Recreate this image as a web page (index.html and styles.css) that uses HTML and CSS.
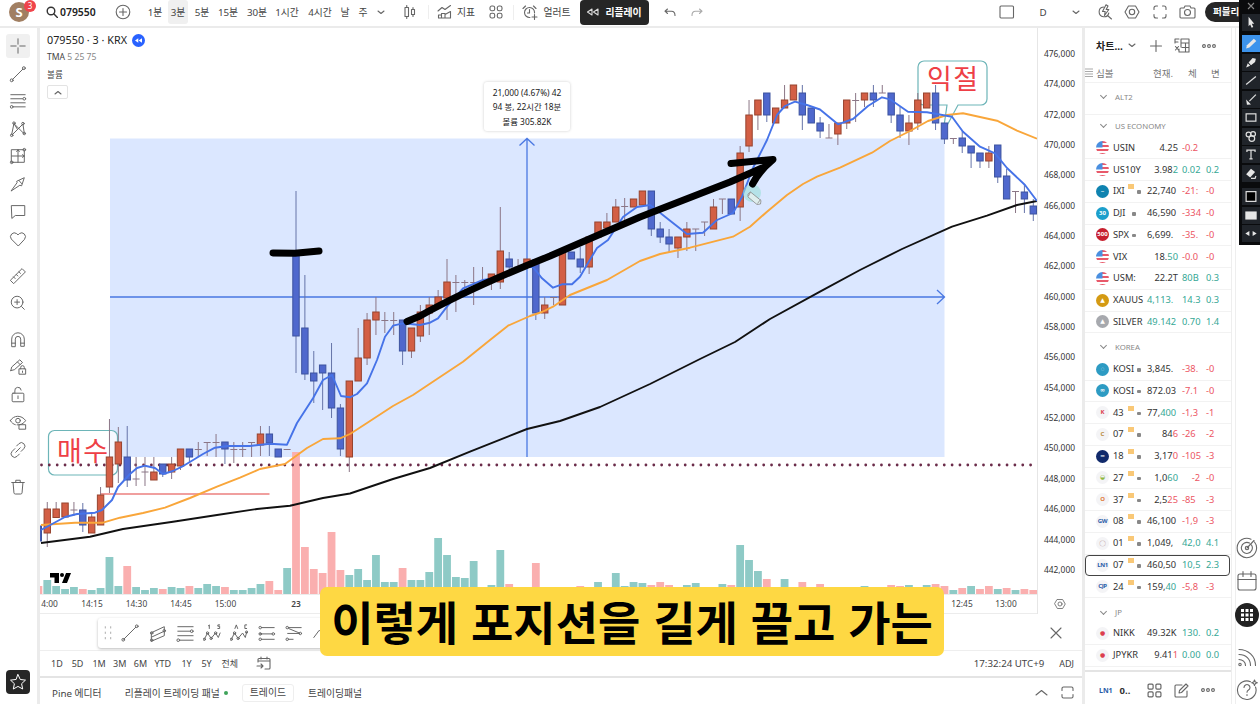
FILE: index.html
```html
<!DOCTYPE html>
<html lang="ko">
<head>
<meta charset="utf-8">
<title>079550 · 3 · KRX</title>
<link rel="stylesheet" href="styles.css">
</head>
<body>
<div class="app">
  <header class="topbar">
    <div class="avatar">S<span class="badge">3</span></div>
    <div class="search"><svg class="ic" width="12" height="12" viewBox="0 0 12 12"><circle cx="5" cy="5" r="3.8"/><path d="M8 8l3.400 3.400"/></svg><b>079550</b></div>
    <svg class="ic" width="16" height="16" viewBox="0 0 16 16"><circle cx="8" cy="8" r="6.800"/><path d="M8 4.500v7M4.500 8h7"/></svg>
    <span>1분</span><span class="tf-on">3분</span><span>5분</span><span>15분</span><span>30분</span><span>1시간</span><span>4시간</span><span>날</span><span>주</span>
    <svg class="ic" width="8" height="5" viewBox="0 0 8 5"><path d="M1 1l3 2.500 3-2.500"/></svg>
    <svg class="ic" width="12" height="14" viewBox="0 0 12 14"><rect x="1" y="2.500" width="3.500" height="9"/><path d="M2.750 0.500v2M2.750 11.500v2M9 2.500v2M9 9.500v2"/><rect x="7.500" y="4.500" width="3" height="5"/></svg>
    <div class="pair"><svg class="ic" width="15" height="14" viewBox="0 0 15 14"><path d="M1 6l4-3.500 3 2 5.500-4M1.500 13v-3h3v3zM4.500 13V8.500h3.500V13zM8 13V9.500l5.500-3V13z"/></svg>지표</div>
    <svg class="ic" width="14" height="14" viewBox="0 0 14 14"><rect x="1" y="1" width="4.700" height="4.700" rx="1.800"/><rect x="8.300" y="1" width="4.700" height="4.700" rx="1.800"/><rect x="1" y="8.300" width="4.700" height="4.700" rx="1.800"/><rect x="8.300" y="8.300" width="4.700" height="4.700" rx="1.800"/></svg>
    <div class="pair"><svg class="ic" width="16" height="15" viewBox="0 0 16 15"><path d="M12.500 8A5 5 0 1 0 8 12.500M7.500 4.500V8H5.500M1 3.500L3.500 1M11.500 1L14 3.500M12.500 9.500v5M10 12h5"/></svg>얼러트</div>
    <div class="replay"><svg class="ic" width="13" height="8" viewBox="0 0 13 8"><path d="M6 1v6L1.500 4zM12 1v6L7.500 4z"/></svg>리플레이</div>
    <svg class="ic" width="12" height="9" viewBox="0 0 12 9"><path d="M3.500 1L1 3.200l2.500 2.300M1 3.200h6.500C10 3.200 11 5 11 7.500"/></svg>
    <svg class="ic faint" width="12" height="9" viewBox="0 0 12 9"><path d="M8.500 1L11 3.200 8.500 5.500M11 3.200H4.500C2 3.200 1 5 1 7.500"/></svg>
    <i></i>
    <svg class="ic" width="16" height="14" viewBox="0 0 16 14"><rect x="1" y="1" width="13.500" height="12" rx="1"/></svg>
    <span>D</span>
    <svg class="ic" width="8" height="5" viewBox="0 0 8 5"><path d="M1 1l3 2.500 3-2.500"/></svg>
    <svg class="ic" width="16" height="16" viewBox="0 0 16 16"><path d="M6.500 3A4.900 4.900 0 1 0 11.800 9M10.500 11.500l4 3.500M9 .8L5.500 7.500h2.700l-.7 4 4.300-6H9.200L11 2z"/></svg>
    <svg class="ic" width="16" height="16" viewBox="0 0 16 16"><path d="M4.500 2h7L15 8l-3.500 6h-7L1 8z"/><circle cx="8" cy="8" r="2.700"/></svg>
    <svg class="ic" width="14" height="14" viewBox="0 0 14 14"><path d="M1 4.500V3a2 2 0 0 1 2-2h1.500M9.500 1H11a2 2 0 0 1 2 2v1.500M13 9.500V11a2 2 0 0 1-2 2H9.500M4.500 13H3a2 2 0 0 1-2-2V9.500"/></svg>
    <svg class="ic" width="17" height="14" viewBox="0 0 17 14"><path d="M1 4a1 1 0 0 1 1-1h3l1-2h5l1 2h3a1 1 0 0 1 1 1v8a1 1 0 0 1-1 1H2a1 1 0 0 1-1-1z"/><circle cx="8.500" cy="7.500" r="3"/></svg>
    <div class="publish">퍼블리</div>
  </header>

  <nav class="tools">
    <a class="on"><svg class="ic" viewBox="0 0 20 20"><path d="M10 2v6M10 12v6M2 10h6M12 10h6"/></svg></a>
    <a><svg class="ic" viewBox="0 0 20 20"><path d="M4 16L15.500 4.500"/><circle cx="3" cy="17" r="1.600"/><circle cx="16.500" cy="3.500" r="1.600"/></svg></a>
    <a><svg class="ic" viewBox="0 0 20 20"><path d="M2 3h16M2 7.500h13M2 12h16M5 16.500h13"/><circle cx="17" cy="7.500" r="1.500"/><circle cx="3" cy="16.500" r="1.500"/></svg></a>
    <a><svg class="ic" viewBox="0 0 20 20"><path d="M3 16L5.500 4l11 11M15.500 4.500l-12 12M5.500 4l4 6.500L15.500 4.500 17 15"/><circle cx="3" cy="17" r="1.400"/><circle cx="5.500" cy="3.500" r="1.400"/><circle cx="15.500" cy="4" r="1.400"/><circle cx="17" cy="15" r="1.400"/></svg></a>
    <a><svg class="ic" viewBox="0 0 20 20"><path d="M3 3h14v14H3zM10 3v14M3 10h14M8.500 5L10 3l1.500 2M15 8.500L17 10l-2 1.500"/><circle cx="17" cy="3" r="1.500"/><circle cx="3" cy="17" r="1.500"/></svg></a>
    <a><svg class="ic" viewBox="0 0 20 20"><path d="M2.500 17.500L9 8.500 8.500 7l8.500-4-3 9-1.500-.5zM11 6l3 3.500"/></svg></a>
    <a><svg class="ic" viewBox="0 0 20 20"><path d="M3 4h14.500v11H7l-3.500 3z"/></svg></a>
    <a><svg class="ic" viewBox="0 0 20 20"><path d="M10 17.500L2.500 10A4.300 4.300 0 0 1 8.500 4L10 5.500 11.500 4a4.300 4.300 0 0 1 6 6z"/></svg></a>
    <a class="gap"><svg class="ic" viewBox="0 0 20 20"><path d="M1.800 14.500L14.500 1.800l3.700 3.700L5.500 18.200zM5 11l1.800 1.800M8 8.200l1.800 1.800M11 5.300l1.800 1.800"/></svg></a>
    <a><svg class="ic" viewBox="0 0 20 20"><circle cx="9" cy="9" r="6.500"/><path d="M14 14l3 3M9 6.300v5.400M6.300 9h5.400"/></svg></a>
    <a class="gap"><svg class="ic" viewBox="0 0 20 20"><path d="M3 17V9a7 7 0 0 1 14 0v8h-4V9a3 3 0 0 0-6 0v8zM3 13.500h4M13 13.500h4"/></svg></a>
    <a><svg class="ic" viewBox="0 0 20 20"><path d="M2 14l1-4L12 2l3 3-9 8-4 1zM9.500 4.500l3 3M11.500 12h7v6h-7zM13 12v-1.500a2 2 0 0 1 4 0V12M15 14.500v1.500"/></svg></a>
    <a><svg class="ic" viewBox="0 0 20 20"><rect x="3.500" y="8" width="13" height="9.500" rx="1"/><path d="M6.500 8V5.500a3.500 3.500 0 0 1 7-1M10 11v3"/></svg></a>
    <a><svg class="ic" viewBox="0 0 20 20"><path d="M1.500 8.500C5 2 14 2 18.500 8.500 16 12 13 13.500 9 13.200M1.500 8.500C3 11 5 12.500 7 13"/><circle cx="10" cy="8.500" r="2.600"/><rect x="11.500" y="13" width="7" height="5"/></svg></a>
    <a><svg class="ic" viewBox="0 0 20 20"><path d="M8.500 5.500l2.500-2.500a3.600 3.600 0 0 1 5.500 5.500L13.500 11.500M11.500 14.500L9 17a3.600 3.600 0 0 1-5.500-5.500L6.500 8.500M7.500 12.500l5-5"/></svg></a>
    <a class="gap"><svg class="ic" viewBox="0 0 20 20"><path d="M3 5h14M7.500 5V2.500h5V5M4.500 5l1 11.500a1.500 1.500 0 0 0 1.500 1.300h6a1.500 1.500 0 0 0 1.500-1.300L15.500 5"/></svg></a>
    <a class="star"><svg class="ic" viewBox="0 0 20 20"><path d="M10 1.800l2.500 5.400 5.800.7-4.300 4 1.200 5.900L10 14.900l-5.200 2.900L6 11.900l-4.300-4 5.800-.7z"/></svg></a>
  </nav>

  <main class="chart">
    <div class="plot-row">
      <svg id="plot" class="plot" width="997" height="586" viewBox="40 28 997 586">
        <rect class="measure" x="110" y="138.500" width="834.500" height="318.500"/>
        <g id="volume"></g>
        <path class="m-line" d="M110 297H944M527 457V139M519.500 145.500L527 138.500l7.500 7M937 290l7.500 7-7.500 7"/>
        <g class="note"><rect x="48.500" y="430.500" width="69" height="44.500" rx="6"/><path d="M924 61h57a6 6 0 0 1 6 6v32a6 6 0 0 1-6 6h-23L943 133l4-28h-23a6 6 0 0 1-6-6V67a6 6 0 0 1 6-6z"/></g>
        <text class="note-text" x="57" y="461" textLength="51">매수</text>
        <text class="note-text" x="927" y="89" textLength="51">익절</text>
        <path class="dots" d="M41.500 465H1037"/>
        <path class="redline" d="M101 494H269.500"/>
        <g id="candles"></g>
        <path class="ma black" d="M41 543L90 536.700L123 529L173 521.700L217 515L257 509L290 505.700L323 498L350 493.500L393 479L430 468L470 451.700L527 429L560 421L600 407L650 384L700 359L735 342L770 319L820 291.700L860 270L902 249L952 226.700L987 215.700L1017 205L1037 201"/>
        <path class="ma orange" d="M41 525L75 522.700L103 522.700L120 517.700L143 513L165 507.700L190 498L217 486.700L240 477.700L260 469L285 464L307 448L323 439L340 438.300L350 434L367 423L393 406L413 395L437 379L463 361.700L490 340L508 325.700L530 316L542 312L553 306.700L570 295L607 280L640 261L660 254L690 247.700L733 236.700L750 226.700L767 211.700L787 195L803 184L817 176.700L840 167.700L872 152.700L890 141L910 131L928 121L947 115L963 113.300L997 120.700L1017 130.700L1037 138.700"/>
        <path class="ma blue" d="M41 530L65 517L77 514L95 512.700L102 510L112 500L118 487L130 474L137 468L145 465.700L155 468L163 474L173 471L182 466.700L203 454L215 447.700L227 446L250 446L270 443.700L287 444.700L297 423L313 398.300L323 380L332 375L341 396L350 397.300L357 394L367 383.300L377 360L385 336.700L393 325.700L403 323.300L420 325L430 322.700L438 318.300L447 306.700L463 288.300L483 280L503 276.700L520 267L533 267L542 278.300L553 287.700L562 284.300L572 284.300L580 276.700L588 263L597 248L608 240L623 217L637 207L650 205L660 212.700L673 223L687 234L703 232.700L717 220L733 213L742 196.700L753 168L767 140L777 115L785 106L795 101.700L807 105L820 109.500L838 124.300L853 119L868 106L882 97.300L890 99.300L908 111.700L927 112.300L952 116.700L963 131.700L980 146.700L995 153.300L1007 168L1025 185L1037 201"/>
        <circle class="glow" cx="752" cy="193" r="9"/>
        <g class="ink"><path d="M273 253L295 253.300L319 251"/><path d="M407 321.500L420 316Q470 288 550 256L640 217L730 182L762 168M731 163.500L773 159.500Q760 170 752.500 184"/></g>
        <path class="cursor" d="M748 194l2.500-2 10.500 8.500-.5 3.500-3.500.5-9-7.500zM750.500 192l-2 4M757.500 203.500l3-4"/>
        <g class="logo"><path d="M50 573h9v10h-4.500v-5.500H50z"/><circle cx="62" cy="575" r="2"/><path d="M66 573h5l-4 10h-5z"/></g>
        <path class="axis-line" d="M40 594.500H1037M40 613.500H1037"/>
        <g class="time"><text x="49.500" y="607">4:00</text><text x="92" y="607">14:15</text><text x="136.500" y="607">14:30</text><text x="181" y="607">14:45</text><text x="225.500" y="607">15:00</text><text x="296" y="607" class="day">23</text><text x="962" y="607">12:45</text><text x="1006" y="607">13:00</text></g>
      </svg>
      <div class="price-axis">
        <span>476,000</span><span>474,000</span><span>472,000</span><span>470,000</span><span>468,000</span><span>466,000</span><span>464,000</span><span>462,000</span><span>460,000</span><span>458,000</span><span>456,000</span><span>454,000</span><span>452,000</span><span>450,000</span><span>448,000</span><span>446,000</span><span>444,000</span><span>442,000</span>
        <svg class="ic" width="12" height="12" viewBox="0 0 16 16"><path d="M4.500 2h7L15 8l-3.500 6h-7L1 8z"/><circle cx="8" cy="8" r="2.700"/></svg>
      </div>
      <div class="legend">
        <div class="title">079550 · 3 · KRX <svg width="13" height="13" viewBox="0 0 13 13"><circle cx="6.500" cy="6.500" r="6.500" fill="#2962ff"/><path fill="#fff" d="M6.300 4.200v4.600L3 6.500zM10 4.200v4.600L6.700 6.500z"/></svg></div>
        <div>TMA <em>5 25 75</em></div>
        <div>볼륨</div>
        <div class="fold"><svg class="ic" width="8" height="5" viewBox="0 0 8 5"><path d="M1 4l3-2.500L7 4"/></svg></div>
      </div>
      <div class="tip">21,000 (4.67%) 42<br>94 봉, 22시간 18분<br>볼륨 305.82K</div>
    </div>

    <div class="draw-row">
      <div class="draw-bar">
        <svg class="ic faint" viewBox="0 0 20 20"><path stroke-dasharray="1.500 4.500" d="M7 3v15M13 3v15"/></svg>
        <svg class="ic" viewBox="0 0 20 20"><path d="M3 17L16.500 3.500"/><circle cx="2.500" cy="17.500" r="1.500"/><circle cx="17.500" cy="2.500" r="1.500"/></svg>
        <svg class="ic" viewBox="0 0 20 20"><path d="M3 9.500L17 3v10L3 19zM3 14.500L17 8"/><circle cx="3" cy="10" r="1.400"/><circle cx="17" cy="7.500" r="1.400"/><circle cx="3" cy="18" r="1.400"/></svg>
        <svg class="ic" viewBox="0 0 20 20"><path d="M2 3h17M2 8h14M2 13h17M4 18h15"/><circle cx="17.500" cy="8" r="1.500"/><circle cx="2.500" cy="18" r="1.500"/></svg>
        <svg class="ic" viewBox="0 0 20 20"><path d="M1.500 17L5 10l4 6 5-6 3 5 2-5M6 2l1-1v4M18.500 1h-2v1.500h2V5h-2"/><circle cx="1.500" cy="17" r="1.300"/><circle cx="5" cy="10" r="1.300"/><circle cx="9" cy="16" r="1.300"/><circle cx="14" cy="10" r="1.300"/></svg>
        <svg class="ic" viewBox="0 0 20 20"><path d="M1.500 17L5 10l4 6 5-6 3 5 1.500-6M5.500 5L7 1l1.500 4M18.500 1h-2v4h2"/><circle cx="1.500" cy="17" r="1.300"/><circle cx="5" cy="10" r="1.300"/><circle cx="9" cy="16" r="1.300"/><circle cx="18.500" cy="9" r="1.300"/></svg>
        <svg class="ic" viewBox="0 0 20 20"><path d="M4 4h14M3 11h13M4 17h14M2 11h2" /><circle cx="2.500" cy="4" r="1.400"/><circle cx="17" cy="11" r="1.400"/><circle cx="2.500" cy="11" r="1.400"/><circle cx="2.500" cy="17" r="1.400"/></svg>
        <svg class="ic" viewBox="0 0 20 20"><path d="M4 4h14M3 10.500h13M4 17h5M4 5l12 5" /><circle cx="2.500" cy="4" r="1.400"/><circle cx="17" cy="10.500" r="1.400"/><circle cx="2.500" cy="17" r="1.400"/></svg>
        <svg class="ic" viewBox="0 0 20 20"><path d="M2 15l6-8 6 6 5-8"/></svg>
      </div>
      <svg class="ic close" width="12" height="12" viewBox="0 0 12 12"><path d="M1 1l10 10M11 1L1 11"/></svg>
    </div>
    <div class="range-row">
      <span>1D</span><span>5D</span><span>1M</span><span>3M</span><span>6M</span><span>YTD</span><span>1Y</span><span>5Y</span><span>전체</span>
      <svg class="ic" width="15" height="14" viewBox="0 0 15 14"><path d="M2 6V3.500a1 1 0 0 1 1-1h10a1 1 0 0 1 1 1V12a1 1 0 0 1-1 1H9M2 5h12M5 1v2M11 1v2M1 10h6M5 8l2 2-2 2"/></svg>
      <span class="clock">17:32:24 UTC+9</span><span class="adj">ADJ</span>
    </div>
    <div class="tab-row">
      <span>Pine 에디터</span><span>리플레이 트레이딩 패널<i class="dot"></i></span><span class="trade">트레이드</span><span>트레이딩패널</span>
      <svg class="ic up" width="13" height="7" viewBox="0 0 13 7"><path d="M1 6l5.500-4.500L12 6"/></svg>
      <svg class="ic" width="13" height="13" viewBox="0 0 13 13"><path d="M1 4.500V2.500A1.500 1.500 0 0 1 2.500 1h8A1.500 1.500 0 0 1 12 2.500v2M12 8.500v2a1.500 1.500 0 0 1-1.500 1.500h-8A1.500 1.500 0 0 1 1 10.500v-2"/></svg>
    </div>
    <div class="caption">이렇게 포지션을 길게 끌고 가는</div>
  </main>

  <aside class="watch">
    <div class="w-head"><b>차트...</b><svg class="ic" width="8" height="5" viewBox="0 0 8 5"><path d="M1 1l3 2.500 3-2.500"/></svg><svg class="ic" width="12" height="12" viewBox="0 0 12 12"><path d="M6 .5v11M.5 6h11"/></svg><svg class="ic" width="16" height="15" viewBox="0 0 16 15"><path d="M7 1h8v13H5v-3M7 5h8M8 9.500h7M7 1v8M11.500 5v9M1 5V1h4M1 4h3M1.500 8.500l3 3.500M4.500 8.500l-3 3.500"/></svg><svg class="ic" width="14" height="4" viewBox="0 0 14 4"><circle cx="2" cy="2" r="1.400"/><circle cx="7" cy="2" r="1.400"/><circle cx="12" cy="2" r="1.400"/></svg></div>
    <div class="w-cols"><svg class="ic faint" width="8" height="9" viewBox="0 0 8 9"><path d="M0 1h8M0 3.500h8M0 6h8M0 8.500h8"/></svg><span>심볼</span><span>현재.</span><span>체</span><span>변</span></div>
    <div class="group g0">ALT2</div>
    <div class="group gu">US ECONOMY</div>
    <div class="row"><i class="us"></i><s>USIN</s><b>4.25</b><u class="r">-0.2</u></div>
    <div class="row"><i class="us"></i><s>US10Y</s><b>3.98<q class="g">2</q></b><u class="g">0.02</u><u class="g">0.2</u></div>
    <div class="row"><i class="c1">~</i><s>IXI<sup></sup><sub></sub></s><b class="cut">22,740</b><u class="r">-21:</u><u class="r">-0</u></div>
    <div class="row"><i class="c2">30</i><s>DJI<sub class="near"></sub></s><b class="cut">46,590</b><u class="r">-334</u><u class="r">-0</u></div>
    <div class="row"><i class="c3">500</i><s>SPX<sub class="near"></sub></s><b class="cut">6,699.</b><u class="r">-35.</u><u class="r">-0</u></div>
    <div class="row"><i class="us"></i><s>VIX</s><b>18.<q class="g">50</q></b><u class="r">-0.0</u><u class="r">-0</u></div>
    <div class="row"><i class="us"></i><s>USM:</s><b>22.2T</b><u class="g">80B</u><u class="g">0.3</u></div>
    <div class="row"><i class="c4">▲</i><s>XAUUS</s><b class="cut g">4,113.</b><u class="g">14.3</u><u class="g">0.3</u></div>
    <div class="row"><i class="c5">▲</i><s>SILVER</s><b class="cut g">49.142</b><u class="g">0.70</u><u class="g">1.4</u></div>
    <div class="group gk">KOREA</div>
    <div class="row"><i class="c6">◌</i><s>KOSI<sub></sub></s><b class="cut">3,845.</b><u class="r">-38.</u><u class="r">-0</u></div>
    <div class="row"><i class="c6">∞</i><s>KOSI<sub></sub></s><b class="cut">872.03</b><u class="r">-7.1</u><u class="r">-0</u></div>
    <div class="row"><i class="l rd">K</i><s>43<sup></sup><sub></sub></s><b class="cut">77,<q class="g">400</q></b><u class="r">-1,3</u><u class="r">-1</u></div>
    <div class="row"><i class="l gd">C</i><s>07<sup></sup><sub></sub></s><b>84<q class="r">6</q></b><u class="r">-26</u><u class="r">-2</u></div>
    <div class="row"><i class="c7">━</i><s>18<sup></sup><sub></sub></s><b>3,17<q class="r">0</q></b><u class="r">-105</u><u class="r">-3</u></div>
    <div class="row"><i class="l gr">◒</i><s>27<sup></sup><sub></sub></s><b>1,0<q class="g">60</q></b><u class="r e">-2</u><u class="r">-0</u></div>
    <div class="row"><i class="l or">O</i><s>37<sup></sup><sub></sub></s><b>2,5<q class="r">25</q></b><u class="r">-85</u><u class="r">-3</u></div>
    <div class="row"><i class="l bl">GW</i><s>08<sup></sup><sub></sub></s><b class="cut">46,100</b><u class="r">-1,9</u><u class="r">-3</u></div>
    <div class="row"><i class="l pk">◯</i><s>01<sup></sup><sub></sub></s><b class="cut">1,049,</b><u class="g">42,0</u><u class="g">4.1</u></div>
    <div class="row sel"><i class="l bl">LN1</i><s>07<sup></sup><sub></sub></s><b class="cut">460,50</b><u class="g">10,5</u><u class="g">2.3</u></div>
    <div class="row"><i class="l bl">CJP</i><s>24<sup></sup><sub></sub></s><b class="cut">159,<q class="g">40</q></b><u class="r">-5,8</u><u class="r">-3</u></div>
    <div class="group gj">JP</div>
    <div class="row"><i class="l rd">●</i><s>NIKK</s><b class="cut">49.32K</b><u class="g">130.</u><u class="g">0.2</u></div>
    <div class="row"><i class="l rd">●</i><s>JPYKR</s><b>9.41<q class="r">1</q></b><u class="g">0.00</u><u class="g">0.0</u></div>
    <div class="w-foot"><i>LN1</i><b>0..</b><svg class="ic" width="15" height="15" viewBox="0 0 14 14"><rect x="1" y="1" width="4.700" height="4.700" rx="1"/><rect x="8.300" y="1" width="4.700" height="4.700" rx="1"/><rect x="1" y="8.300" width="4.700" height="4.700" rx="1"/><rect x="8.300" y="8.300" width="4.700" height="4.700" rx="1"/></svg><svg class="ic" width="15" height="15" viewBox="0 0 15 15"><path d="M8 2H2a1 1 0 0 0-1 1v10a1 1 0 0 0 1 1h10a1 1 0 0 0 1-1V8M5 10l.5-2.500L12 1l2 2-6.500 6.500z"/></svg><svg class="ic" width="14" height="4" viewBox="0 0 14 4"><circle cx="2" cy="2" r="1.400"/><circle cx="7" cy="2" r="1.400"/><circle cx="12" cy="2" r="1.400"/></svg></div>
  </aside>

  <aside class="rail">
    <svg class="ic" viewBox="0 0 22 22"><path d="M18.500 5A9.700 9.700 0 1 1 15 2.200M15.500 8A5.500 5.500 0 1 1 13.500 6.100M11 11l7-7.500"/><circle cx="11" cy="11" r="1.700"/></svg>
    <svg class="ic" viewBox="0 0 22 22"><rect x="2" y="4" width="18" height="16" rx="2"/><path d="M2 9.500h18M7 1.500v5M15 1.500v5"/></svg>
    <svg viewBox="0 0 24 24" class="apps"><circle cx="12" cy="12" r="12"/><path d="M6 6h3v3H6zM10.500 6h3v3h-3zM15 6h3v3h-3zM6 10.500h3v3H6zM10.500 10.500h3v3h-3zM15 10.500h3v3h-3zM6 15h3v3H6zM10.500 15h3v3h-3zM15 15h3v3h-3z"/></svg>
    <svg class="ic feed" viewBox="0 0 22 22"><path d="M3 3.500C12 3.500 19.500 10 19.500 19.500M3 8.500c7 0 11.500 4.500 11.500 11M3 13.500c3.500 0 6.500 2.500 6.500 6"/><circle cx="4" cy="18.500" r="1.200"/></svg>
    <svg class="ic" viewBox="0 0 22 22"><path d="M14.500 2.700A9.300 9.300 0 1 0 19.500 8M8 8.500a3 3 0 1 1 4.500 2.600c-1 .6-1.500 1-1.500 2.200M11 15.500v1M18.500 1l.8 2 2 .8-2 .8-.8 2-.8-2-2-.8 2-.8z"/></svg>
  </aside>

  <div class="palette">
    <svg class="p-close" viewBox="0 0 16 16"><path d="M4 4l8 8M12 4l-8 8"/></svg>
    <svg viewBox="0 0 16 16"><path class="f" d="M5 1l7 8.500H9l1.800 4-2 1L7 10.500 5 12.500z"/></svg>
    <svg class="p-on" viewBox="0 0 16 16"><path class="f" d="M2 14l1-4 8.500-8 3 3L6 13z"/></svg>
    <svg viewBox="0 0 16 16"><path class="f" d="M2 14l2-5 3 3zM5 8l5-5.500 4 1-1 4-5 4z"/></svg>
    <svg viewBox="0 0 16 16"><path d="M2 13L14 3"/></svg>
    <svg viewBox="0 0 16 16"><path d="M14 2L6 10"/><path class="f" d="M2 8l6 6-5 .5z"/></svg>
    <svg viewBox="0 0 16 16"><rect x="2" y="3.500" width="12" height="9"/></svg>
    <svg viewBox="0 0 16 16"><circle cx="5" cy="5.500" r="3"/><circle cx="10.500" cy="5" r="3"/><circle cx="9" cy="10.500" r="3.500"/></svg>
    <svg viewBox="0 0 16 16"><path d="M3 5V2.500h10V5M8 2.500v11M6 13.500h4"/></svg>
    <svg viewBox="0 0 16 16"><path class="f" d="M2 9l6-7 5 4-6 7z"/><path d="M8 14h5l1-3"/></svg>
    <svg class="p-gap" viewBox="0 0 16 16"><rect class="k" x="2" y="2" width="12" height="12"/></svg>
    <svg viewBox="0 0 16 16"><rect class="f" x="1" y="3" width="14" height="10"/></svg>
    <svg viewBox="0 0 16 16"><path class="f" d="M1 8l5-3v6zM15 8l-5-3v6z"/></svg>
  </div>
</div>
<script src="chart.js"></script>
</body>
</html>
```

FILE: styles.css
```css
* { box-sizing: border-box; }
body { margin: 0; background: #fff; color: #333; font: 9.5px "Noto Sans", "Noto Sans CJK KR", sans-serif; }
.app { position: relative; width: 1260px; height: 704px; overflow: hidden; display: grid; grid-template: 28px 676px / 40px 1045px 150px 25px; }
svg { display: block; flex: none; }
.ic { fill: none; stroke: #666; stroke-width: 1.1; stroke-linecap: round; stroke-linejoin: round; }
.faint { stroke: #aaa; }

.topbar { grid-column: 1 / -1; display: grid; align-items: center; justify-items: center; white-space: nowrap; height: 28px; grid-template-rows: 24px; border-bottom: 2px solid #ebebeb; font-size: 9.8px; color: #444;
  grid-template-columns: 38px 69px 32px 32px 14px 34px 18px 40px 20px 46px 4px 32px 4px 54px 39px 40px 62px 72px 40px 14px 288px 30px 42px 24px 34px 20px 36px 18px 64px; }
.avatar { position: relative; width: 20px; height: 20px; border-radius: 50%; background: #a17f62; color: #fff; font: bold 13px/20px "Noto Sans", sans-serif; text-align: center; }
.badge { position: absolute; left: 15px; top: -2px; width: 12px; height: 12px; border-radius: 50%; background: #f0444b; font: 8px/11px "Noto Sans", sans-serif; }
.search { justify-self: start; display: flex; align-items: center; gap: 2px; padding-left: 8px; color: #222; font-size: 10.400px; }
.search b { font-weight: 600; }
.search .ic { stroke: #333; stroke-width: 1.400; }
.tf-on { background: #f0f0f0; padding: 5px 3px; border-radius: 3px; }
.pair { display: flex; align-items: center; gap: 5px; border-left: 1px solid #eee; padding-left: 8px; margin-left: -10px; }
.replay { display: flex; align-items: center; gap: 6px; height: 25px; width: 69px; justify-content: center; border-radius: 4px; background: #262626; color: #fff; font-weight: 600; }
.replay .ic { stroke: #ddd; }
.publish { justify-self: start; margin-left: 9px; width: 80px; height: 20px; padding-left: 8px; border-radius: 10px; background: #262626; color: #fff; line-height: 19px; font-size: 9.500px; font-weight: 600; }

.tools { display: flex; flex-direction: column; align-items: center; padding: 4.500px 1px 10px 0; border-right: 3px solid #ebebeb; }
.tools a { flex: none; width: 24px; height: 27.500px; display: grid; place-items: center; border-radius: 3px; }
.tools svg { width: 18px; height: 18px; }
.tools .gap { margin-top: 9.300px; }
.tools .on { background: #f0f0f0; height: 24px; margin: 1.750px 0; }
.tools .star { margin-top: auto; height: 24px; background: #262626; border-radius: 4px; }
.tools .star .ic { stroke: #fff; }

.chart { position: relative; display: flex; flex-direction: column; border-right: 3px solid #ebebeb; }
.plot-row { position: relative; display: flex; height: 586px; }
.price-axis { width: 45px; border-left: 1px solid #e6e6e6; padding: 11px 0 0 6px; font-size: 8.400px; display: flex; flex-direction: column; }
.price-axis span { flex: none; height: 30.350px; line-height: 30.350px; }
.price-axis svg { margin: 13px 0 0 10px; }
.legend { position: absolute; left: 7px; top: 3px; display: flex; flex-direction: column; font-size: 8.600px; line-height: 17.500px; color: #444; }
.legend .title { display: flex; gap: 5px; align-items: center; font-size: 10.800px; line-height: 18px; color: #222; }
.legend em { font-style: normal; color: #888; }
.fold { width: 21px; height: 14px; display: grid; place-items: center; margin-top: 1px; border: 1px solid #e3e3e3; border-radius: 2px; }
.tip { position: absolute; left: 444px; top: 54px; width: 86px; height: 49px; padding-top: 4px; background: #fff; border-radius: 3px; box-shadow: 0 0 3px #ccc; text-align: center; font-size: 8.400px; line-height: 14.300px; color: #222; white-space: nowrap; }

.measure { fill: #dbe7ff; }
.m-line { fill: none; stroke: #4a78e2; stroke-width: 1.300; }
.note { fill: #fff; fill-opacity: .75; stroke: #6db5b8; stroke-width: 1.200; }
.note-text { font: 27px "Noto Sans CJK KR", sans-serif; fill: #ee3f46; }
.dots { stroke: #6b2c4a; stroke-width: 2.800; stroke-dasharray: 0 7.850; stroke-linecap: round; }
.redline { stroke: #e2403f; stroke-width: 1.200; }
.ma { fill: none; stroke-width: 1.900; stroke-linejoin: round; }
.ma.black { stroke: #111; }
.ma.orange { stroke: #f9a63a; }
.ma.blue { stroke: #4673e8; }
.ink { fill: none; stroke: #000; stroke-width: 7px; stroke-linecap: round; stroke-linejoin: round; }
.glow { fill: #9be0d8; fill-opacity: .6; }
.cursor { fill: #dfeeee; stroke: #888; stroke-width: .8; }
.logo { fill: #000; }
.axis-line { stroke: #ececec; }
.wick { stroke: #8b7686; stroke-width: 1; }
.wick.down { stroke: #6674a8; }
.body { stroke-width: 1; }
.body.up { fill: #d35f45; stroke: #97442f; }
.body.down { fill: #4f68cd; stroke: #3d539f; }
.vol.up { fill: #8ecac6; }
.vol.down { fill: #faafaf; }
.time text { font: 8.400px "Noto Sans", sans-serif; fill: #444; text-anchor: middle; }
.time .day { font-weight: 600; }

.draw-row { height: 37px; display: flex; align-items: center; justify-content: space-between; padding: 2px 20px 0 58px; border-bottom: 1px solid #eee; }
.draw-bar { display: flex; align-items: center; gap: 9.300px; width: 420px; height: 30px; padding-left: 1px; box-shadow: 0 1px 3px #bbb; border-radius: 3px; }
.draw-bar svg { width: 18px; height: 18px; }
.draw-bar .faint { margin-right: -5px; }
.range-row { display: flex; align-items: center; height: 28px; padding-left: 11px; border-bottom: 2px solid #e4e4e4; font-size: 9px; color: #444; white-space: nowrap; }
.range-row span { width: 20.700px; }
.range-row span:nth-child(6) { width: 27px; }
.range-row span:nth-child(7) { width: 20px; }
.range-row span:nth-child(8) { width: 20px; }
.range-row span:nth-child(9) { width: 35px; }
.range-row .clock { width: auto; margin-left: auto; font-size: 9.700px; }
.range-row .adj { width: auto; margin: 0 8px 0 15px; }
.tab-row { display: flex; align-items: center; height: 25px; margin-top: 1px; padding: 2px 8px 0 12px; font-size: 9.800px; color: #444; white-space: nowrap; }
.tab-row span { margin-right: 23px; }
.tab-row span:nth-child(2) { margin-right: 14px; }
.tab-row .trade { height: 18px; line-height: 16px; padding: 0 7px; margin-right: 14px; border: 1px solid #eee; border-radius: 3px; }
.dot { display: inline-block; width: 4px; height: 4px; margin: 0 0 2px 4px; border-radius: 50%; background: #3fa35a; }
.tab-row .up { margin: 0 13px 0 auto; }
.caption { position: absolute; left: 280px; top: 559px; width: 624px; height: 69px; border-radius: 7px; background: #fed843; color: #000; font: bold 46px/66px "Noto Sans CJK KR", sans-serif; text-align: center; white-space: nowrap; }

.watch { display: flex; flex-direction: column; width: 147px; border-right: 1px solid #eee; }
.w-head { display: flex; align-items: center; height: 35px; padding-left: 11px; gap: 12px; color: #222; }
.w-head b { width: 26px; white-space: nowrap; font-size: 10px; margin-right: -6px; }
.w-head svg:nth-of-type(1) { margin-right: 2px; }
.w-cols { display: grid; grid-template-columns: 11px 57px 35px 23px 15px; align-items: center; height: 20px; border-bottom: 1px solid #f2f2f2; color: #777; font-size: 9.500px; white-space: nowrap; }
.group { height: 22px; line-height: 22px; padding-left: 30px; font-size: 7.800px; color: #888; position: relative; }
.group::before { content: ""; position: absolute; left: 16px; top: 7px; width: 4px; height: 4px; border: solid #888; border-width: 0 1px 1px 0; transform: rotate(45deg); }
.g0 { height: 32px; line-height: 28px; border-bottom: 1px solid #f2f2f2; }
.g0::before { top: 10px; }
.gu { height: 22.500px; }
.gk { height: 25.500px; line-height: 28px; }
.gk::before { top: 10px; }
.gj { height: 25px; line-height: 28px; }
.gj::before { top: 11px; }
.row { display: grid; grid-template-columns: 13px 30px 31px 20px 17px; column-gap: 4px; align-items: center; height: 21.750px; flex: none; padding-left: 11px; border-bottom: 1px solid #f2f2f2; font-size: 9.300px; line-height: 14px; white-space: nowrap; }
.row i { width: 13px; height: 13px; border-radius: 50%; color: #fff; font: bold 6px/13px "Noto Sans", "DejaVu Sans", sans-serif; text-align: center; }
.row s { text-decoration: none; position: relative; }
.row b { font-weight: 400; text-align: right; }
.row .cut { text-align: left; }
.row u { text-decoration: none; }
.row .e { text-align: right; padding-right: 2px; }
q { quotes: none; }
.r { color: #ec5563; }
.g { color: #35a795; }
.row s sup { position: absolute; left: 15px; top: 0; width: 6px; height: 5px; background: #f9c877; }
.row s sub { position: absolute; right: 2px; top: 6px; width: 4px; height: 3.500px; background: #888; border-radius: 1px; }
.row s .near { right: 7px; }
.us { background: linear-gradient(#4a8fe0, #4a8fe0) 0 0 / 50% 50% no-repeat, repeating-linear-gradient(#e8596a 0 2px, #fff 2px 4px); }
.c1 { background: #0f83b0; } .c2 { background: #1c9fcc; } .c3 { background: #c7202e; } .c4 { background: #d49a13; }
.c5 { background: #a7a9ae; } .c6 { background: #2d9bc3; } .c7 { background: #112a6b; }
.row .l { background: #f4f4f6; }
.row .rd { color: #dc3f4f; } .row .gd { color: #b98a3c; } .row .gr { color: #8fb83f; } .row .or { color: #e07b39; } .row .bl { color: #2a5ba8; letter-spacing: -.4px; } .row .pk { color: #c9b3b3; }
.sel { border: 1.500px solid #444; border-radius: 4px; padding-left: 10px; width: 145px; }
.w-foot { flex: 1; display: flex; align-items: center; gap: 12px; padding: 5px 0 0 14px; border-top: 2px solid #e4e4e4; margin-top: 3px; }
.w-foot i { font: bold 7px "Noto Sans", sans-serif; color: #2a5ba8; margin-right: -5px; }
.w-foot b { width: 14px; margin-right: 1px; }

.rail { display: flex; flex-direction: column; align-items: center; justify-content: flex-end; gap: 11px; padding: 0 2px 3px 0; border-left: 1px solid #eee; }
.rail svg { width: 22px; height: 22px; }
.rail .apps { width: 24px; height: 24px; fill: #222; }
.rail .apps path { fill: #fff; }
.rail .feed { margin-top: 8px; }

.palette { position: absolute; left: 1239px; top: 0; width: 21px; height: 245px; display: flex; flex-direction: column; align-items: center; background: #0a0b0d; padding-left: 3px; }
.palette svg { width: 18px; height: 17px; margin-bottom: 1.500px; padding: 2px; background: #20242a; fill: none; stroke: #ddd; stroke-width: 1.500; }
.palette .f { fill: #e6e6e6; stroke: none; }
.palette .k { fill: #000; }
.palette .p-close { height: 12px; margin-bottom: 2px; padding: 0; background: none; stroke: #888; }
.palette .p-on { background: #3c93ec; margin: 2px 0 2px; }
.palette .p-gap { margin-top: 5px; }
```

FILE: chart.js
```js
const NS = "http://www.w3.org/2000/svg";
const STEP = 8.883;
const xAt = (k) => 296 + STEP * k;

function add(parent, tag, cls, attrs) {
  const el = document.createElementNS(NS, tag);
  el.setAttribute("class", cls);
  for (const name in attrs) el.setAttribute(name, attrs[name]);
  parent.appendChild(el);
}

// direction (u: up, d: down, x: open equals close), body top, body bottom, wick top, wick bottom
const candles = `u 509 533 502 547|u 509 517.5 502 518|u 503 517 503 517|x 510 510 502 516|d 510 525 503 532|u 517 533 514 533|u 495 525 487 525
u 457 487 419 493|u 442 464 427 483|d 457 480 426 487|x 479 479 457 486|x 472 472 457 486|u 472 480 457 480|d 464 474 464 477|u 464 472 457 479
u 449 466 449 470|d 449 457 449 463|x 449.5 449.5 442 457|x 442.5 442.5 442 456|x 442.5 442.5 434 457|d 442 449 442 464|x 449.5 449.5 442 463|x 449.5 449.5 442 457
x 442.5 442.5 442 457|u 434 445 426 456|d 434 443 426 456|d 449 457 449 457|x 449.5 449.5 449 450|d 255 336 191 373|d 328 374 275 380|d 373 381 351 403
d 365 373 365 410|d 373 408 343 418|d 408 449 404 456|u 381 457 381 472|u 358 381 328 381|u 320 358 313 365|u 312 320 297 335|x 320.5 320.5 312 333
x 320.5 320.5 312 335|d 320 351 320 365|u 328 351 328 358|u 312 336 305 342|u 305 313 297 335|u 297 305 290 305|u 282 298 259 320|x 282.5 282.5 275 312
x 282.5 282.5 280 290|x 282.5 282.5 267 305|x 282.5 282.5 267 283|u 274 280 274 290|u 251 282 207 289|d 259 267 252 270|x 267 267 259 268|u 259 265 259 265
d 260 313 260 320|u 305 313 297 319|x 297.5 297.5 297 305|u 252 305 252 305|d 252 259 252 259|d 259 267 247 273|u 237 267 237 274|u 222 237 222 237
u 222 228 213 228|u 207 222 199 222|x 206.5 206.5 198 220|u 199 207 199 207|u 191 205 191 205|d 191 229 191 236|d 229 237 222 243|d 237 244 229 252
u 237 248 237 258|u 229 237 222 251|x 229 229 229 251|x 222 222 222 236|u 207 229 199 229|x 199 199 199 214|d 199 214 199 214|u 153 207 146 221
u 115 146 100 152|u 100 115 100 130|d 93 115 93 122|u 108 123 108 123|u 100 108 85 108|u 85 100 85 100|d 93 115 85 130|d 108 123 108 123
d 123 131 117 138|x 138 138 124 138|u 123 134 123 145|u 100 123 100 129|x 100.5 100.5 93 122|u 93 100 93 107|d 93 100 85 107|x 93 93 85 93
d 93 115 93 123|d 115 131 107 138|u 123 131 115 145|u 100 123 93 130|u 93 108 93 108|d 93 123 85 130|d 123 139 123 144|x 138.5 138.5 138 144
d 138 146 131 153|d 146 153 146 168|d 153 161 153 168|u 153 161 146 168|d 145 177 145 183|d 176 199 169 199|x 191.5 191.5 191 213|d 192 199 184 213|d 206 214 199 221`;

const candleLayer = document.getElementById("candles");
candles.split(/[|\n]/).forEach((row, i) => {
  const [dir, top, bottom, high, low] = row.split(" ");
  const x = xAt(i - 28);
  const cls = dir === "d" ? "down" : "up";
  add(candleLayer, "path", "wick " + cls, { d: `M${x} ${high}V${low}` });
  if (dir === "x") add(candleLayer, "path", "wick", { d: `M${x - 3.5} ${top}h7` });
  else add(candleLayer, "rect", "body " + cls, { x: x - 3.2, y: top, width: 6.4, height: bottom - top });
});
add(candleLayer, "rect", "body down", { x: 40, y: 526, width: 1.5, height: 15 });

// volume bar tops; a leading minus marks a falling bar
const volume = [-586, 580, 586, 589, 587, -589, 590, 588, 557, 586, -566, 587, 590, 588, -589, 587, 588, -586, 588, 584, 586, -587, 590, 590, 588, 584, -581, -590, 568,
  -452, -547, -569, -573, -532, -570, 575, 569, 580, 555, 582, 582, -568, 580, 580, 572, 538, 555, 577, 578, 561, 588, 585, 550, -584, 588, -589, -563, 589, 588, 589, -589, -586, 588,
  582, 588, 573, 586, 582, 583, -585, -582, -585, 588, 585, 583, 588, -587, 584, -585, 545, 560, 571, -579, 588, 579, 588, -582, 588, -584, 588, 589, 588, 588, 586, 589, 588, -585, -586, 585, 588, 585, -584, -586,
  590, -588, 586, -589, -586, 589, -588, 590, -589, -590];
const volumeLayer = document.getElementById("volume");
volume.forEach((v, i) => {
  const top = Math.abs(v);
  add(volumeLayer, "rect", "vol " + (v < 0 ? "down" : "up"), { x: xAt(i - 29) - 3.9, y: top, width: 7.8, height: 594 - top });
});
```
